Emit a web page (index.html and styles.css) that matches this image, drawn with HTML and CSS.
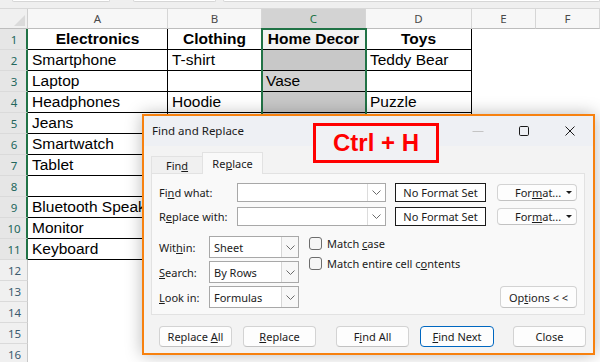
FILE: index.html
```html
<!DOCTYPE html>
<html>
<head>
<meta charset="utf-8">
<link rel="stylesheet" href="styles.css">
</head>
<body>
<div class="screen">
  <div class="topbar"><span class="tb tb1"></span><span class="tb tb2"></span><span class="tb tb3"></span></div>
  <div class="sheet">
    <div class="corner"><span class="tri"></span></div>
    <div class="ch">A</div><div class="ch">B</div><div class="ch ch-sel">C</div><div class="ch">D</div><div class="ch">E</div><div class="ch">F</div>

    <div class="rh sel">1</div><div class="c th">Electronics</div><div class="c th">Clothing</div><div class="c th c1">Home Decor</div><div class="c th">Toys</div><div class="e"></div><div class="e"></div>
    <div class="rh sel">2</div><div class="c">Smartphone</div><div class="c">T-shirt</div><div class="c cg"></div><div class="c">Teddy Bear</div><div class="e"></div><div class="e"></div>
    <div class="rh sel">3</div><div class="c">Laptop</div><div class="c"></div><div class="c cg2">Vase</div><div class="c"></div><div class="e"></div><div class="e"></div>
    <div class="rh sel">4</div><div class="c">Headphones</div><div class="c">Hoodie</div><div class="c cg"></div><div class="c">Puzzle</div><div class="e"></div><div class="e"></div>
    <div class="rh sel">5</div><div class="c">Jeans</div><div class="c"></div><div class="c cg"></div><div class="c"></div><div class="e"></div><div class="e"></div>
    <div class="rh sel">6</div><div class="c">Smartwatch</div><div class="c"></div><div class="c cg"></div><div class="c"></div><div class="e"></div><div class="e"></div>
    <div class="rh sel">7</div><div class="c">Tablet</div><div class="c"></div><div class="c cg"></div><div class="c"></div><div class="e"></div><div class="e"></div>
    <div class="rh sel">8</div><div class="c"></div><div class="c"></div><div class="c cg"></div><div class="c"></div><div class="e"></div><div class="e"></div>
    <div class="rh sel">9</div><div class="c">Bluetooth Speaker</div><div class="c"></div><div class="c cg"></div><div class="c"></div><div class="e"></div><div class="e"></div>
    <div class="rh sel">10</div><div class="c">Monitor</div><div class="c"></div><div class="c cg"></div><div class="c"></div><div class="e"></div><div class="e"></div>
    <div class="rh sel">11</div><div class="c">Keyboard</div><div class="c"></div><div class="c cg"></div><div class="c"></div><div class="e"></div><div class="e"></div>
    <div class="rh">12</div><div class="e"></div><div class="e"></div><div class="e"></div><div class="e"></div><div class="e"></div><div class="e"></div>
    <div class="rh">13</div><div class="e"></div><div class="e"></div><div class="e"></div><div class="e"></div><div class="e"></div><div class="e"></div>
    <div class="rh">14</div><div class="e"></div><div class="e"></div><div class="e"></div><div class="e"></div><div class="e"></div><div class="e"></div>
    <div class="rh">15</div><div class="e"></div><div class="e"></div><div class="e"></div><div class="e"></div><div class="e"></div><div class="e"></div>
    <div class="rh">16</div><div class="e"></div><div class="e"></div><div class="e"></div><div class="e"></div><div class="e"></div><div class="e"></div>
  </div>
  <div class="selection"></div>

  <div class="dialog">
    <div class="titlebar">
      <span class="title">Find and Replace</span>
      <div class="winctl">
        <span class="wbtn"><svg width="12" height="12" viewBox="0 0 12 12"><path d="M0.5 6.5h11" stroke="#c4c4c4" stroke-width="1"/></svg></span>
        <span class="wbtn"><svg width="12" height="12" viewBox="0 0 12 12"><rect x="1.5" y="1.5" width="9" height="9" rx="1.2" fill="none" stroke="#1a1a1a" stroke-width="1"/></svg></span>
        <span class="wbtn"><svg width="12" height="12" viewBox="0 0 12 12"><path d="M1.5 1.5l9 9M10.5 1.5l-9 9" stroke="#1a1a1a" stroke-width="1"/></svg></span>
      </div>
    </div>
    <div class="hotkey">Ctrl + H</div>
    <div class="tabs">
      <div class="tab"><span>Fin<u>d</u></span></div>
      <div class="tab active"><span>Re<u>p</u>lace</span></div>
    </div>
    <div class="panel">
      <div class="frow">
        <span class="flabel">Fi<u>n</u>d what:</span>
        <div class="combo"><span class="combo-btn"><svg width="9" height="5" viewBox="0 0 9 5"><path d="M0.5 0.5l4 4 4-4" fill="none" stroke="#6a6a6a" stroke-width="1"/></svg></span></div>
        <div class="nofmt">No Format Set</div>
        <div class="btn fmt"><span>For<u>m</u>at...</span><span class="caret"></span></div>
      </div>
      <div class="frow frow2">
        <span class="flabel">R<u>e</u>place with:</span>
        <div class="combo"><span class="combo-btn"><svg width="9" height="5" viewBox="0 0 9 5"><path d="M0.5 0.5l4 4 4-4" fill="none" stroke="#6a6a6a" stroke-width="1"/></svg></span></div>
        <div class="nofmt">No Format Set</div>
        <div class="btn fmt"><span>For<u>m</u>at...</span><span class="caret"></span></div>
      </div>
      <div class="lower">
        <div class="selects">
          <div class="srow"><span class="slabel">Wit<u>h</u>in:</span><div class="select"><span class="sval">Sheet</span><span class="sbtn"><svg width="9" height="5" viewBox="0 0 9 5"><path d="M0.5 0.5l4 4 4-4" fill="none" stroke="#6a6a6a" stroke-width="1"/></svg></span></div></div>
          <div class="srow"><span class="slabel"><u>S</u>earch:</span><div class="select"><span class="sval">By Rows</span><span class="sbtn"><svg width="9" height="5" viewBox="0 0 9 5"><path d="M0.5 0.5l4 4 4-4" fill="none" stroke="#6a6a6a" stroke-width="1"/></svg></span></div></div>
          <div class="srow"><span class="slabel"><u>L</u>ook in:</span><div class="select"><span class="sval">Formulas</span><span class="sbtn"><svg width="9" height="5" viewBox="0 0 9 5"><path d="M0.5 0.5l4 4 4-4" fill="none" stroke="#6a6a6a" stroke-width="1"/></svg></span></div></div>
        </div>
        <div class="checks">
          <div class="chk"><span class="box"></span><span>Match <u>c</u>ase</span></div>
          <div class="chk"><span class="box"></span><span>Match entire cell c<u>o</u>ntents</span></div>
        </div>
        <div class="btn opts"><span>Op<u>t</u>ions &lt; &lt;</span></div>
      </div>
    </div>
    <div class="buttons">
      <div class="btn bb"><span>Replace <u>A</u>ll</span></div>
      <div class="btn bb"><span><u>R</u>eplace</span></div>
      <div class="btn bb wide"><span>F<u>i</u>nd All</span></div>
      <div class="btn bb def"><span><u>F</u>ind Next</span></div>
      <div class="btn bb wide2"><span>Close</span></div>
    </div>
  </div>
</div>
</body>
</html>
```
FILE: styles.css
```css
* { box-sizing: border-box; }
html, body { margin: 0; padding: 0; background: #ffffff; }
.screen {
  position: relative;
  width: 600px;
  height: 362px;
  overflow: hidden;
  background: #ffffff;
}
.topbar {
  height: 9px;
  background: #efefef;
  border-bottom: 1px solid #d8d8d8;
  display: flex;
}
.tb {
  display: block;
  height: 2px;
  background: #ffffff;
  border: 1px solid #d6d6d6;
  border-top: none;
  border-radius: 0 0 3px 3px;
}
.tb1 { margin-left: 12px; width: 98px; }
.tb2 { margin-left: 23px; width: 83px; }
.tb3 { margin-left: 7px; flex: 1; }

.sheet {
  display: grid;
  grid-template-columns: 28px 140px 94px 104px 106px 64px 64px;
  grid-template-rows: 20px;
  grid-auto-rows: 21px;
  font-family: "Liberation Sans", Arial, sans-serif;
  font-size: 15.5px;
  color: #000;
}
.corner {
  background: #f0f0f0;
  border-right: 1px solid #cfcfcf;
  border-bottom: 1px solid #bdbdbd;
  display: flex;
  align-items: flex-end;
  justify-content: flex-end;
  padding: 0 2px 2px 0;
}
.tri {
  width: 0; height: 0;
  border-left: 11px solid transparent;
  border-bottom: 11px solid #dadada;
}
.ch {
  background: #f7f7f7;
  border-right: 1px solid #d6d6d6;
  border-bottom: 1px solid #bdbdbd;
  font-family: "Noto Sans", sans-serif;
  font-size: 11.5px;
  color: #4a4a4a;
  display: flex;
  align-items: center;
  justify-content: center;
}
.ch-sel { background: #d3d3d3; color: #217346; }
.rh {
  background: #f0f0f0;
  border-right: 1px solid #c8c8c8;
  border-bottom: 1px solid #dadada;
  font-family: "Noto Sans", sans-serif;
  font-size: 11.5px;
  color: #3b5a6e;
  display: flex;
  align-items: center;
  justify-content: center;
  padding-left: 2px;
}
.rh.sel {
  background: #e6e6e6;
  border-right: 2px solid #217346;
  color: #22675c;
}
.c {
  background: #ffffff;
  border-right: 1px solid #000;
  border-bottom: 1px solid #000;
  padding-left: 4px;
  display: flex;
  align-items: center;
  white-space: nowrap;
  overflow: visible;
}
.c.th { font-weight: bold; justify-content: center; padding-left: 0; }
.c.c1 { background: #f3f3f3; }
.c.cg { background: #c8c8c8; }
.c.cg2 { background: #d2d2d2; }
.e { background: transparent; }

.selection {
  position: absolute;
  left: 261px;
  top: 28px;
  width: 106px;
  height: 234px;
  border: 2px solid #217346;
}

/* dialog */
.dialog {
  position: absolute;
  left: 142px;
  top: 114px;
  width: 453px;
  height: 241px;
  border: 2px solid #f7810f;
  background: #f3f3f3;
  box-shadow: 0 0 16px rgba(0, 0, 0, 0.28);
  font-family: "Noto Sans", sans-serif;
  font-size: 11px;
  color: #1b1b1b;
  display: flex;
  flex-direction: column;
}
u { text-underline-offset: 1px; }
.titlebar {
  height: 30px;
  background: #eef0f4;
  display: flex;
  align-items: center;
  padding-left: 8px;
}
.title { font-size: 11.5px; color: #1a1a1a; margin-top: -2px; }
.winctl { margin-left: auto; display: flex; height: 30px; }
.wbtn {
  width: 46px;
  height: 30px;
  display: flex;
  align-items: center;
  justify-content: center;
}
.hotkey {
  position: absolute;
  left: 169px;
  top: 7px;
  width: 126px;
  height: 40px;
  border: 3px solid #ff0000;
  background: #f0f1f4;
  color: #ff0000;
  font-family: "Liberation Sans", Arial, sans-serif;
  font-weight: bold;
  font-size: 24px;
  display: flex;
  align-items: center;
  justify-content: center;
}
.tabs {
  display: flex;
  align-items: flex-end;
  margin-top: 6px;
  padding-left: 7px;
  height: 21px;
  position: relative;
  z-index: 1;
}
.tab {
  height: 17px;
  width: 51px;
  background: #f0f0f0;
  border: 1px solid #e2e2e2;
  border-bottom: none;
  border-right: none;
  display: flex;
  align-items: center;
  justify-content: center;
  padding-top: 1px;
}
.tab.active {
  height: 22px;
  width: 61px;
  margin-bottom: -1px;
  background: #f9f9f9;
  border: 1px solid #e2e2e2;
  border-bottom: none;
  padding-top: 0;
}
.panel {
  margin: 0 8px 0 7px;
  height: 142px;
  background: #f9f9f9;
  border: 1px solid #e2e2e2;
  padding: 9px 7px 0 7px;
  display: flex;
  flex-direction: column;
}
.frow { display: flex; align-items: center; height: 19px; }
.frow2 { margin-top: 5px; }
.flabel { width: 78px; }
.combo {
  width: 149px;
  height: 19px;
  background: #ffffff;
  border: 1px solid #a8a8a8;
  display: flex;
  justify-content: flex-end;
}
.combo-btn {
  width: 18px;
  height: 100%;
  border-left: 1px solid #dcdcdc;
  display: flex;
  align-items: center;
  justify-content: center;
}
.nofmt {
  margin-left: 9px;
  width: 91px;
  height: 19px;
  background: #ffffff;
  border: 1px solid #1a1a1a;
  display: flex;
  align-items: center;
  justify-content: center;
}
.btn {
  background: #fdfdfd;
  border: 1px solid #d3d3d3;
  border-bottom-color: #c2c2c2;
  border-radius: 4px;
  display: flex;
  align-items: center;
  justify-content: center;
}
.fmt {
  margin-left: 11px;
  width: 80px;
  height: 17px;
  justify-content: flex-start;
  padding-left: 17px;
}
.caret {
  margin-left: auto;
  margin-right: 4px;
  width: 0; height: 0;
  border-left: 3px solid transparent;
  border-right: 3px solid transparent;
  border-top: 3px solid #1a1a1a;
}
.lower { display: flex; margin-top: 10px; }
.selects { display: flex; flex-direction: column; gap: 3px; }
.srow { display: flex; align-items: center; height: 22px; }
.slabel { width: 50px; }
.select {
  width: 90px;
  height: 22px;
  background: #ffffff;
  border: 1px solid #a8a8a8;
  display: flex;
  align-items: center;
}
.sval { padding-left: 4px; flex: 1; }
.sbtn {
  width: 17px;
  height: 100%;
  border-left: 1px solid #d6d6d6;
  background: #f7f7f7;
  display: flex;
  align-items: center;
  justify-content: center;
}
.checks {
  margin-left: 10px;
  padding-top: 1px;
  display: flex;
  flex-direction: column;
  gap: 7px;
}
.chk { display: flex; align-items: center; height: 13px; gap: 5px; }
.box {
  width: 13px;
  height: 13px;
  border: 1px solid #6d6d6d;
  border-radius: 3px;
  background: #f6f6f6;
}
.opts {
  margin-left: auto;
  align-self: flex-end;
  width: 77px;
  height: 22px;
}
.buttons {
  display: flex;
  margin-top: 11px;
  padding-left: 15px;
  gap: 11px;
}
.bb { width: 73px; height: 21px; }
.bb.wide { margin-left: 9px; }
.bb.def { width: 74px; border: 1px solid #0067c0; }
.bb.wide2 { margin-left: 8px; }
```
